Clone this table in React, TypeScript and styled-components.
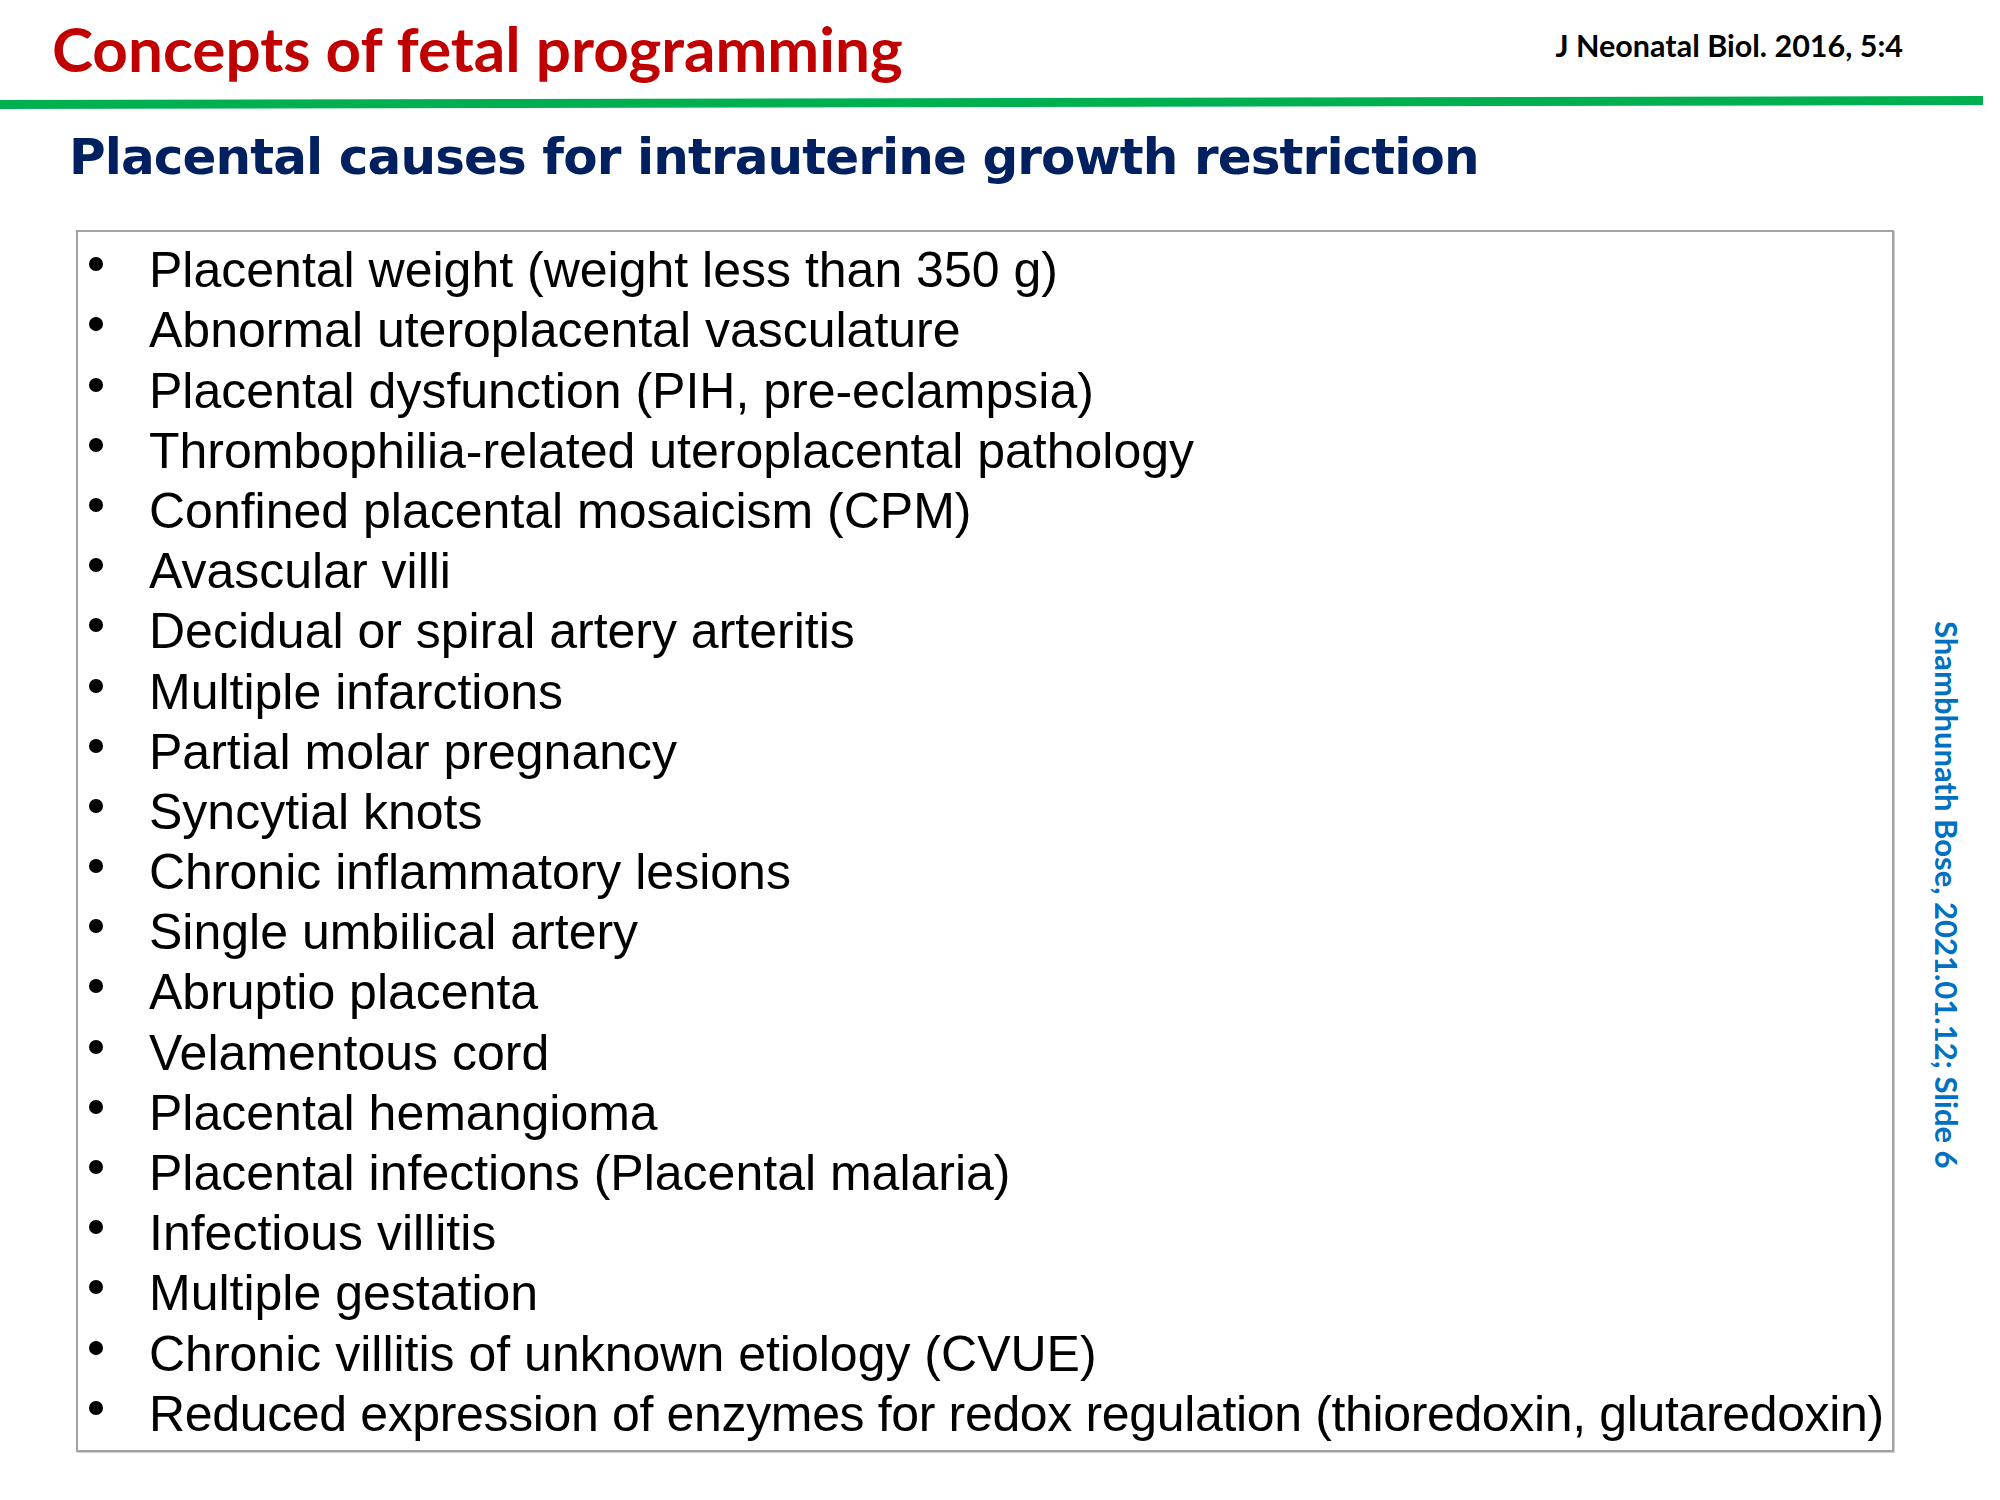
import styled, { createGlobalStyle } from 'styled-components';

const GlobalStyle = createGlobalStyle`
    html, body {
        margin: 0;
        padding: 0;
        background: #ffffff;
    }
`;

const causes: { text: string; tight?: boolean }[] = [
    { text: 'Placental weight (weight less than 350 g)' },
    { text: 'Abnormal uteroplacental vasculature' },
    { text: 'Placental dysfunction (PIH, pre-eclampsia)' },
    { text: 'Thrombophilia-related uteroplacental pathology' },
    { text: 'Confined placental mosaicism (CPM)' },
    { text: 'Avascular villi' },
    { text: 'Decidual or spiral artery arteritis' },
    { text: 'Multiple infarctions' },
    { text: 'Partial molar pregnancy' },
    { text: 'Syncytial knots' },
    { text: 'Chronic inflammatory lesions' },
    { text: 'Single umbilical artery' },
    { text: 'Abruptio placenta' },
    { text: 'Velamentous cord' },
    { text: 'Placental hemangioma' },
    { text: 'Placental infections (Placental malaria)' },
    { text: 'Infectious villitis' },
    { text: 'Multiple gestation' },
    { text: 'Chronic villitis of unknown etiology (CVUE)' },
    { text: 'Reduced expression of enzymes for redox regulation (thioredoxin, glutaredoxin)', tight: true },
];

export default function App() {
    return (
        <>
            <GlobalStyle />
            <Slide>
                <Header>
                    <Title>Concepts of fetal programming</Title>
                    <Reference>J Neonatal Biol. 2016, 5:4</Reference>
                </Header>
                <Rule />
                <Subtitle>Placental causes for intrauterine growth restriction</Subtitle>
                <Body>
                    <ListBox>
                        {causes.map((c) => (
                            <Item key={c.text}>
                                <Bullet />
                                <ItemText $tight={c.tight}>{c.text}</ItemText>
                            </Item>
                        ))}
                    </ListBox>
                    <Side>
                        <Credit>Shambhunath Bose, 2021.01.12; Slide 6</Credit>
                    </Side>
                </Body>
            </Slide>
        </>
    );
}

const Slide = styled.div`
    width: 2000px;
    height: 1500px;
    overflow: hidden;
    background: #ffffff;
    display: flex;
    flex-direction: column;
`;

const Header = styled.div`
    display: flex;
    align-items: flex-start;
    justify-content: space-between;
    padding: 12px 97px 0 52px;
`;

const Title = styled.h1`
    margin: 0;
    font-family: Lato, 'Open Sans', sans-serif;
    font-weight: 700;
    font-size: 62px;
    line-height: 72px;
    color: #c00000;
`;

const Reference = styled.div`
    margin-top: 17px;
    font-family: Lato, 'Open Sans', sans-serif;
    font-weight: 700;
    font-size: 30.5px;
    line-height: 33.6px;
    color: #000000;
`;

const Rule = styled.div`
    width: 1983px;
    height: 9px;
    margin-top: 14px;
    background: #00b050;
    transform: rotate(-0.115deg);
`;

const Subtitle = styled.h2`
    margin: 20px 0 0 69px;
    font-family: 'DejaVu Sans', sans-serif;
    font-weight: 700;
    font-size: 50px;
    line-height: 61.2px;
    letter-spacing: -0.9px;
    color: #002060;
`;

const Body = styled.div`
    display: flex;
    margin-top: 42px;
`;

const ListBox = styled.ul`
    list-style: none;
    box-sizing: border-box;
    width: 1818px;
    margin: 0 0 0 76px;
    padding: 8px 0 6px 10px;
    border: 2px solid #a3a3a3;
    box-shadow: 1px 1px 0 #d0d0d0;
`;

const Item = styled.li`
    display: flex;
    align-items: flex-start;
    height: 60.2px;
`;

const Bullet = styled.span`
    flex: none;
    width: 14px;
    height: 14px;
    margin: 17px 46px 0 1px;
    border-radius: 50%;
    background: #000000;
`;

const ItemText = styled.span<{ $tight?: boolean }>`
    font-family: 'Liberation Sans', Arial, sans-serif;
    font-size: 50px;
    line-height: 60.2px;
    color: #000000;
    white-space: nowrap;
    letter-spacing: ${(p) => (p.$tight ? '-0.35px' : '0')};
`;

const Side = styled.div`
    flex: 1;
    padding: 391px 0 0 35px;
`;

const Credit = styled.div`
    writing-mode: vertical-rl;
    font-family: Lato, 'Open Sans', sans-serif;
    font-weight: 700;
    font-size: 31px;
    line-height: 33.6px;
    color: #0070c0;
    white-space: nowrap;
`;
